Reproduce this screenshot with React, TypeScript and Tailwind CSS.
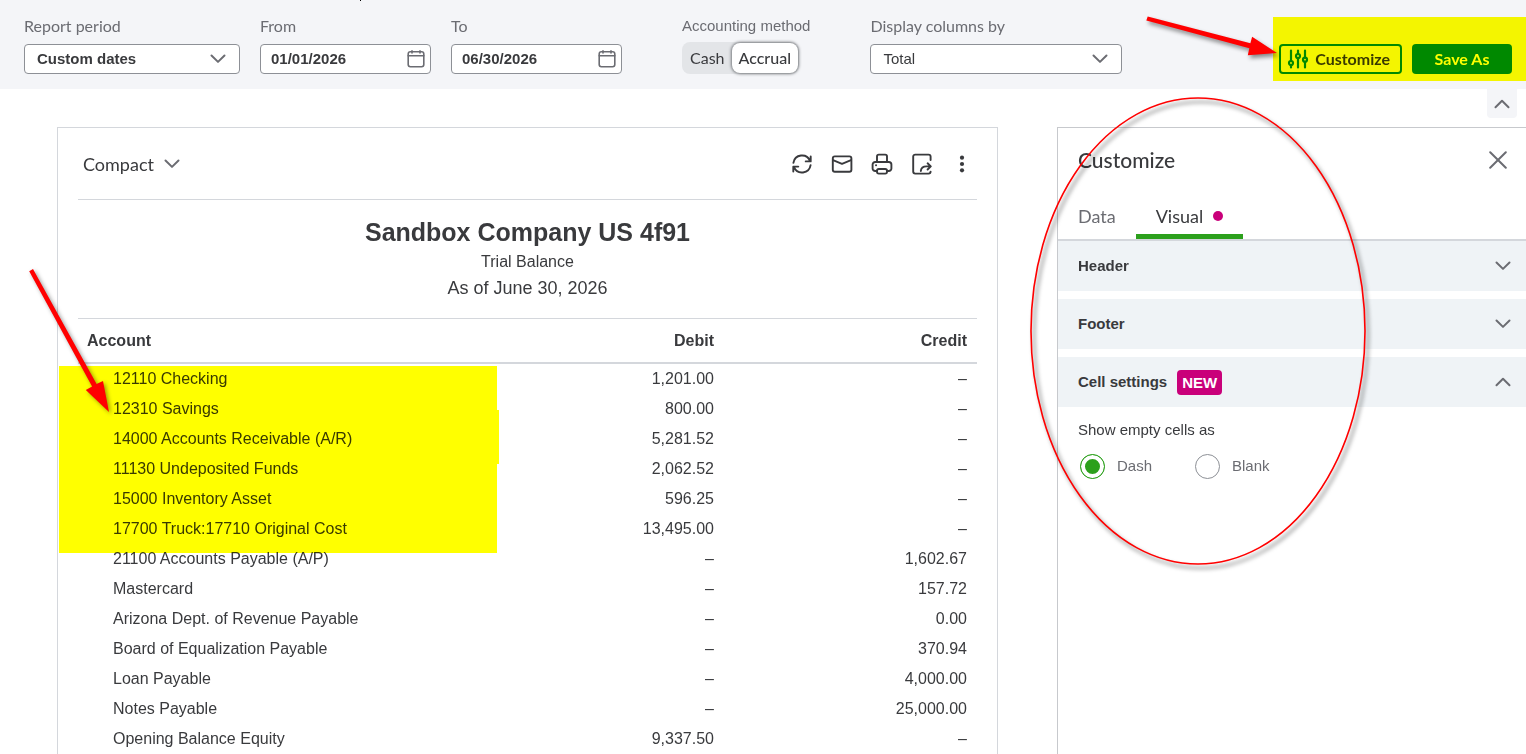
import { useState, ReactNode } from "react";

interface Row {
  account: string;
  debit?: string;
  credit?: string;
}

const ROWS: Row[] = [
  { account: "12110 Checking", debit: "1,201.00" },
  { account: "12310 Savings", debit: "800.00" },
  { account: "14000 Accounts Receivable (A/R)", debit: "5,281.52" },
  { account: "11130 Undeposited Funds", debit: "2,062.52" },
  { account: "15000 Inventory Asset", debit: "596.25" },
  { account: "17700 Truck:17710 Original Cost", debit: "13,495.00" },
  { account: "21100 Accounts Payable (A/P)", credit: "1,602.67" },
  { account: "Mastercard", credit: "157.72" },
  { account: "Arizona Dept. of Revenue Payable", credit: "0.00" },
  { account: "Board of Equalization Payable", credit: "370.94" },
  { account: "Loan Payable", credit: "4,000.00" },
  { account: "Notes Payable", credit: "25,000.00" },
  { account: "Opening Balance Equity", debit: "9,337.50" },
];

function Chevron({ up = false }: { up?: boolean }) {
  return (
    <svg width="16" height="10" viewBox="0 0 16 10" fill="none" stroke="#6b6c72" strokeWidth="2" strokeLinecap="round" strokeLinejoin="round" aria-hidden="true">
      <path d={up ? "M1.5 8.2 8 1.8l6.5 6.4" : "M1.5 1.5 8 7.9l6.5-6.4"} />
    </svg>
  );
}

function CalendarIcon() {
  return (
    <svg width="18" height="18" viewBox="0 0 18 18" fill="none" stroke="#6b6c72" strokeWidth="1.6" strokeLinecap="round" aria-hidden="true">
      <rect x="1.2" y="1.8" width="15.6" height="15" rx="2.2" />
      <path d="M1.2 5.8h15.6M5 .9v2M13 .9v2" />
    </svg>
  );
}

function ToolIcon({ label, children }: { label: string; children: ReactNode }) {
  return (
    <button aria-label={label} className="h-6 w-6">
      <svg width="24" height="24" viewBox="0 0 24 24" fill="none" stroke="#393a3d" strokeWidth="1.9" strokeLinecap="round" strokeLinejoin="round">
        {children}
      </svg>
    </button>
  );
}

function SelectField({ id, label, value, className }: { id: string; label: string; value: string; className: string }) {
  return (
    <div className="flex flex-col gap-2">
      <label htmlFor={id} className="font-['Lato',sans-serif] text-base leading-5 text-[#6b6c72]">{label}</label>
      <div className="relative">
        <select id={id} className={`h-[30px] appearance-none rounded border border-[#8d9096] bg-white px-3 text-[15px] text-[#393a3d] ${className}`}>
          <option>{value}</option>
        </select>
        <span className="pointer-events-none absolute inset-y-0 right-3.5 flex items-center"><Chevron /></span>
      </div>
    </div>
  );
}

function DateField({ id, label, value }: { id: string; label: string; value: string }) {
  return (
    <div className="flex flex-col gap-2">
      <label htmlFor={id} className="font-['Lato',sans-serif] text-base leading-5 text-[#6b6c72]">{label}</label>
      <div className="flex h-[30px] w-[171px] items-center rounded border border-[#8d9096] bg-white pr-[5px] pl-2.5">
        <input id={id} defaultValue={value} className="min-w-0 flex-1 bg-transparent text-[15px] font-bold text-[#393a3d] outline-none" />
        <button aria-label={`Pick ${label} date`}><CalendarIcon /></button>
      </div>
    </div>
  );
}

function FilterBar() {
  const [method, setMethod] = useState("Accrual");
  const methods = ["Cash", "Accrual"];

  return (
    <header className="relative flex items-end bg-[#f4f5f8] px-6 pt-4 pr-3.5 pb-[15px]">
      <span className="absolute top-0 left-[360px] h-px w-px bg-black" />
      <div className="flex gap-5">
        <SelectField id="period" label="Report period" value="Custom dates" className="w-[216px] font-bold" />
        <DateField id="from" label="From" value="01/01/2026" />
        <DateField id="to" label="To" value="06/30/2026" />
      </div>

      <div className="ml-[60px] flex flex-col items-start gap-1.5">
        <span id="method" className="text-[15px] leading-5 text-[#6b6c72]">Accounting method</span>
        <div role="group" aria-labelledby="method" className="flex h-8 rounded-lg bg-[#e3e5e8] p-px font-['Lato',sans-serif] text-base text-[#393a3d]">
          {methods.map((m) => (
            <button
              key={m}
              onClick={() => setMethod(m)}
              className={m === method ? "rounded-lg bg-white px-[7px] font-medium shadow-[0_0_3px_1px_#777a7e]" : "px-[7px]"}
            >
              {m}
            </button>
          ))}
        </div>
      </div>

      <div className="ml-[60px]">
        <SelectField id="columns" label="Display columns by" value="Total" className="w-[252px]" />
      </div>

      <div className="ml-auto flex gap-2.5 font-['Lato',sans-serif] text-base font-bold">
        <button className="flex h-[30px] items-center gap-1.5 rounded border-2 border-[#008900] px-1.5 pr-2.5 text-[#393a3d]">
          <svg width="22" height="20" viewBox="0 0 22 20" fill="none" stroke="#008900" strokeWidth="2.2" strokeLinecap="round" aria-hidden="true">
            <path d="M4 1.5v10.4M4 16.2v2.3M11 1.5v3.3M11 9.2v9.3M18 1.5v7M18 12.9v5.6" />
            <circle cx="4" cy="14" r="2" />
            <circle cx="11" cy="7" r="2" />
            <circle cx="18" cy="10.7" r="2" />
          </svg>
          Customize
        </button>
        <button className="h-[30px] w-[100px] rounded bg-[#008900] text-white">Save As</button>
      </div>

      {/* Highlighter and arrow over the action buttons */}
      <div className="pointer-events-none absolute top-[17px] right-0 h-16 w-[253px] bg-[#ffff00] mix-blend-multiply" />
      <svg className="pointer-events-none absolute top-2 right-[246px] drop-shadow-[2px_3px_2px_rgba(0,0,0,0.45)]" width="140" height="60" viewBox="1140 8 140 60" fill="#ff0000" aria-hidden="true">
        <path d="M1147.7 16.4 1250.4 43.2l1.7-6.4L1277 53l-29.2 2.2 1.5-7L1146.3 20.6z" />
      </svg>
    </header>
  );
}

function Report() {
  return (
    <section className="relative flex-1 border border-b-0 border-[#d4d7dc] px-5">
      <div className="flex h-[72px] items-center border-b border-[#d4d7dc] pr-[3px] pl-[5px]">
        <button className="flex items-center gap-2.5 font-['Lato',sans-serif] text-lg text-[#393a3d]">
          Compact <Chevron />
        </button>
        <div className="ml-auto flex gap-4">
          <ToolIcon label="Refresh">
            <path d="M3.4 10.8A8.7 8.7 0 0 1 20 8.8M20.7 4.4v5h-5M20.6 13.2A8.7 8.7 0 0 1 4 15.2M3.3 19.600v-5h5" />
          </ToolIcon>
          <ToolIcon label="Email">
            <rect x="2.8" y="4.400" width="18.6" height="15.4" rx="2" />
            <path d="M3 8.2l9 3.6 9-3.6" />
          </ToolIcon>
          <ToolIcon label="Print">
            <path d="M7 9.8V4.4a1.800 1.800 0 0 1 1.800-1.800h6.400A1.800 1.800 0 0 1 17 4.400v5.400" />
            <path d="M7 19H5.200a2.600 2.600 0 0 1-2.600-2.600v-3.800A2.600 2.600 0 0 1 5.200 10h13.600a2.600 2.600 0 0 1 2.600 2.600v3.800a2.600 2.600 0 0 1-2.600 2.600H17" />
            <rect x="7" y="17" width="10" height="4.600" rx="1.800" />
            <path d="M6 13.200h.1" />
          </ToolIcon>
          <ToolIcon label="Export">
            <path d="M20.600 8V4.600a2 2 0 0 0-2-2H5.200a2 2 0 0 0-2 2v15a2 2 0 0 0 2 2h13.400a2 2 0 0 0 2-2" />
            <path d="M10.800 19c.4-3 2.600-4.600 5.600-4.600h4M17.600 11.300l3.200 3.100-3.200 3.100" />
          </ToolIcon>
          <ToolIcon label="More">
            <g fill="#393a3d" stroke="none">
              <circle cx="12" cy="5.700" r="2.100" />
              <circle cx="12" cy="12" r="2.100" />
              <circle cx="12" cy="18.300" r="2.100" />
            </g>
          </ToolIcon>
        </div>
      </div>

      <div className="flex flex-col items-center border-b border-[#d4d7dc] pt-4 pb-[18px] text-[#393a3d]">
        <h1 className="text-[25px] leading-8 font-bold">Sandbox Company US 4f91</h1>
        <p className="text-base leading-7">Trial Balance</p>
        <p className="text-lg leading-6">As of June 30, 2026</p>
      </div>

      <table className="w-full table-fixed border-separate border-spacing-0 text-base text-[#393a3d]">
        <thead>
          <tr className="h-[45px]">
            <th scope="col" className="border-b-2 border-[#d4d7dc] pl-[9px] text-left">Account</th>
            <th scope="col" className="w-[253px] border-b-2 border-[#d4d7dc] pr-2.5 text-right">Debit</th>
            <th scope="col" className="w-[253px] border-b-2 border-[#d4d7dc] pr-2.5 text-right">Credit</th>
          </tr>
        </thead>
        <tbody>
          {ROWS.map((row) => (
            <tr key={row.account} className="h-[30px]">
              <td className="pl-[35px]">{row.account}</td>
              <td className="pr-2.5 text-right">{row.debit ?? "–"}</td>
              <td className="pr-2.5 text-right">{row.credit ?? "–"}</td>
            </tr>
          ))}
        </tbody>
      </table>

      {/* Highlighter and arrow over the numbered accounts */}
      <svg className="pointer-events-none absolute top-[238px] left-px mix-blend-multiply" width="440" height="187" fill="#ffff00" aria-hidden="true">
        <path d="M0 0h438v44h2v54h-2v89H0z" />
      </svg>
      <svg className="pointer-events-none absolute top-[132px] -left-[38px] drop-shadow-[2px_2px_2px_rgba(0,0,0,0.4)]" width="100" height="160" viewBox="20 260 100 160" fill="#ff0000" aria-hidden="true">
        <path d="M33 269 96.600 384l6.400-3L109 412l-23.200-22 6.300-3.400L29.200 271.200z" />
      </svg>
    </section>
  );
}

function PanelSection({ title, open = false, badge }: { title: string; open?: boolean; badge?: string }) {
  return (
    <button aria-expanded={open} className="flex h-[50px] w-full items-center bg-[#eff3f6] pr-[15px] pl-5 text-[15px] font-bold text-[#393a3d]">
      {title}
      {badge && <span className="ml-2.5 rounded bg-[#c9007a] px-[5px] leading-[25px] text-white">{badge}</span>}
      <span className="ml-auto"><Chevron up={open} /></span>
    </button>
  );
}

function CustomizePanel() {
  const [emptyAs, setEmptyAs] = useState("Dash");

  return (
    <aside className="relative w-[469px] shrink-0 border-t border-l border-[#c7c9cd]">
      <div className="flex h-16 items-center justify-between pr-[19px] pl-5">
        <h2 className="font-['Lato',sans-serif] text-[21px] leading-7 font-medium text-[#393a3d]">Customize</h2>
        <button aria-label="Close">
          <svg width="18" height="18" viewBox="0 0 18 18" stroke="#6b6c72" strokeWidth="2" strokeLinecap="round">
            <path d="M1.200 1.200l15.600 15.600M16.800 1.200 1.200 16.800" />
          </svg>
        </button>
      </div>

      <div role="tablist" className="flex h-[49px] border-b-2 border-[#d4d7dc] font-['Lato',sans-serif] text-lg">
        <button role="tab" aria-selected="false" className="px-5 text-[#6b6c72]">Data</button>
        <button role="tab" aria-selected="true" className="flex items-center gap-2.5 border-b-[5px] border-[#2ca01c] px-5 pt-[5px] text-[#393a3d]">
          Visual <span className="h-2.5 w-2.5 rounded-full bg-[#c9007a]" />
        </button>
      </div>

      <div className="flex flex-col gap-2">
        <PanelSection title="Header" />
        <PanelSection title="Footer" />
        <PanelSection title="Cell settings" badge="NEW" open />
      </div>

      <div role="radiogroup" aria-labelledby="empty-cells" className="px-5 pt-[13px] text-[15px]">
        <p id="empty-cells" className="leading-5 text-[#393a3d]">Show empty cells as</p>
        <div className="mt-3.5 flex gap-[43px] pl-0.5 text-[#6b6c72]">
          {["Dash", "Blank"].map((option) => (
            <label key={option} className="flex items-center gap-3">
              <input
                type="radio"
                name="empty"
                checked={emptyAs === option}
                onChange={() => setEmptyAs(option)}
                className="h-[25px] w-[25px] appearance-none rounded-full border border-[#8d9096] bg-white checked:border-[#2ca01c] checked:bg-[#2ca01c] checked:shadow-[inset_0_0_0_4px_white]"
              />
              {option}
            </label>
          ))}
        </div>
      </div>

      {/* Hand-drawn ring around the panel */}
      <svg className="pointer-events-none absolute -top-[38px] -left-[38px] drop-shadow-[3px_4px_2px_rgba(0,0,0,0.6)]" width="360" height="490" viewBox="1020 90 360 490" fill="none" aria-hidden="true">
        <ellipse cx="1198" cy="331" rx="167" ry="233" stroke="#ff0000" strokeWidth="1.600" />
      </svg>
    </aside>
  );
}

export default function App() {
  return (
    <div className="flex min-h-screen flex-col overflow-x-hidden bg-white font-['Liberation_Sans',Arial,sans-serif]">
      <FilterBar />
      <div className="flex h-[38px] items-start justify-end pr-[9px]">
        <button aria-label="Collapse filters" className="flex h-[29px] w-[30px] items-center justify-center rounded-b bg-[#f4f5f8]">
          <Chevron up />
        </button>
      </div>
      <main className="flex flex-1 gap-[59px] pl-[57px]">
        <Report />
        <CustomizePanel />
      </main>
    </div>
  );
}
